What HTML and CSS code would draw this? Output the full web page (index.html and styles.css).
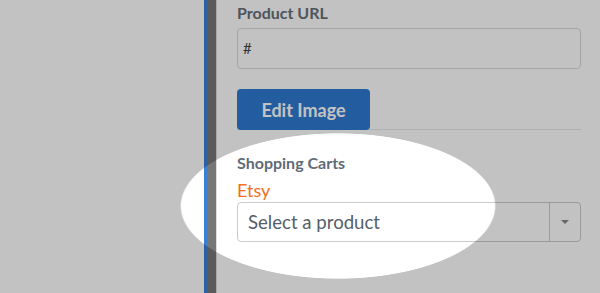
FILE: index.html
```html
<!DOCTYPE html>
<html lang="en">
<head>
    <meta charset="UTF-8">
    <meta name="viewport" content="width=device-width, initial-scale=1.0">
    <title>Product Editor</title>
    <link rel="stylesheet" href="styles.css">
</head>
<body>
    <div class="page">
        <div class="canvas"></div>
        <div class="stripe"></div>
        <div class="bar"></div>

        <div class="panel">
            <label class="label">Product URL</label>
            <div class="input">#</div>

            <div class="actions">
                <button class="btn">Edit Image</button>
            </div>

            <h4 class="section">Shopping Carts</h4>
            <div class="cart-name">Etsy</div>
            <div class="select">
                <span class="select-text">Select a product</span>
                <span class="select-arrow"><span class="caret"></span></span>
            </div>
        </div>
    </div>

    <!-- spotlight on the shopping cart picker -->
    <div class="spotlight"></div>
</body>
</html>
```

FILE: styles.css
```css
body {
    margin: 0;
    font-family: Lato, "Open Sans", sans-serif;
    background: #fff;
}
.page {
    display: flex;
    height: 293px;
    overflow: hidden;
}
.canvas {
    width: 204px;
    background: #fff;
}
.stripe {
    width: 3px;
    background: #3b7fd5;
}
.bar {
    width: 9px;
    background: #777;
}
.panel {
    flex: 1;
    border-left: 1px solid #ddd;
    padding: 3px 19px 0 20px;
}
.label {
    display: block;
    font-size: 16px;
    line-height: 20px;
    font-weight: bold;
    color: #67707a;
    margin-bottom: 5px;
}
.input {
    height: 39px;
    border: 1px solid #d9d9d9;
    border-radius: 4px;
    padding: 0 5px;
    font-size: 15px;
    line-height: 39px;
    color: #444;
}
.actions {
    padding-top: 20px;
    border-bottom: 1px solid #e8e8e8;
}
.btn {
    display: block;
    width: 133px;
    height: 41px;
    border: none;
    border-radius: 4px;
    background: #2f7ad2;
    color: #fff;
    font-family: inherit;
    font-size: 18px;
    font-weight: bold;
    margin-bottom: -1px;
}
.section {
    margin: 23px 0 0;
    font-size: 16px;
    line-height: 20px;
    font-weight: bold;
    color: #5f6b77;
}
.cart-name {
    margin-top: 6px;
    font-size: 18px;
    line-height: 22px;
    color: #f26f21;
}
.select {
    display: flex;
    height: 38px;
    margin-top: 1px;
    border: 1px solid #cbcbcb;
    border-radius: 4px;
}
.select-text {
    flex: 1;
    padding-left: 10px;
    font-size: 18.6px;
    line-height: 38px;
    color: #555e66;
}
.select-arrow {
    width: 30px;
    border-left: 1px solid #cbcbcb;
    display: flex;
    align-items: center;
    justify-content: center;
}
.caret {
    border-left: 4px solid transparent;
    border-right: 4px solid transparent;
    border-top: 4px solid #888;
}
.spotlight {
    position: fixed;
    inset: 0;
    background: radial-gradient(158px 73px at 338px 206px, transparent 99%, rgba(0, 0, 0, 0.24) 100%);
}
```
